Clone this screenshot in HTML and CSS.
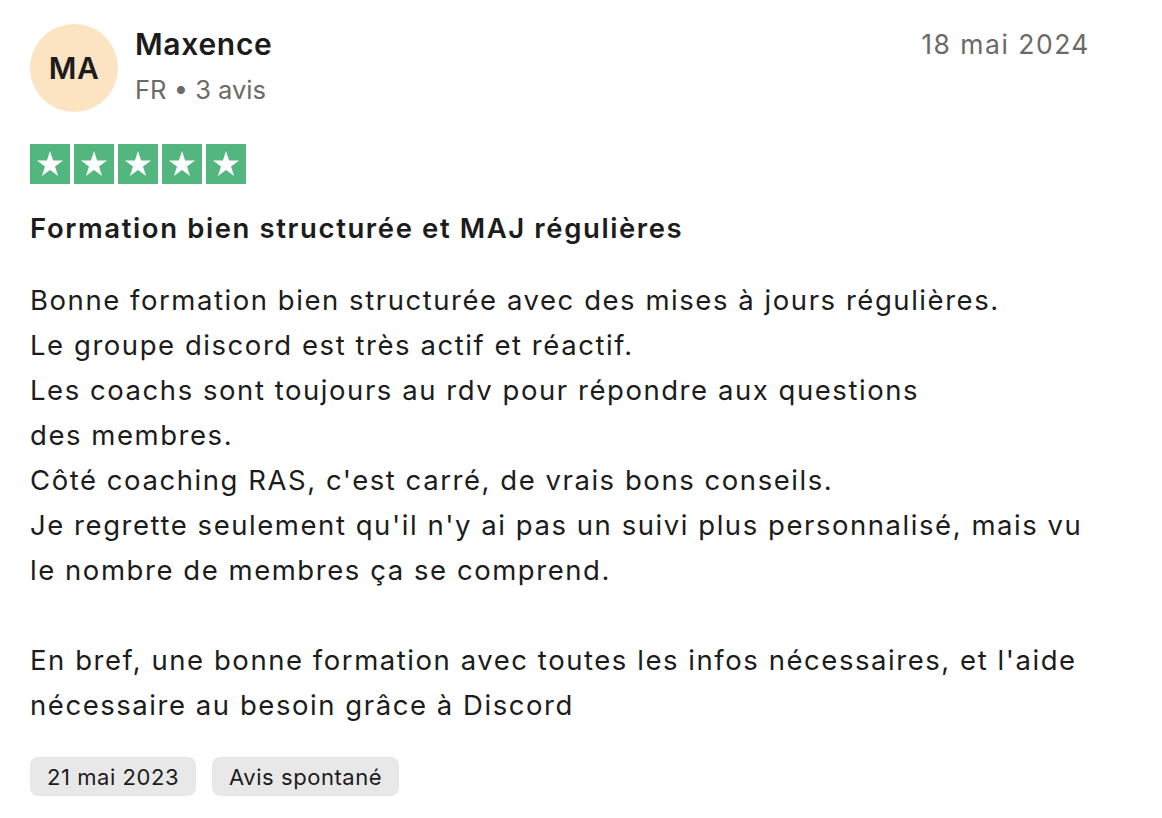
FILE: index.html
```html
<!DOCTYPE html>
<html lang="fr">
<head>
<meta charset="utf-8">
<title>Avis</title>
<link rel="stylesheet" href="styles.css">
</head>
<body>
<article class="review">
  <header class="head">
    <div class="avatar">MA</div>
    <div class="who">
      <div class="name">Maxence</div>
      <div class="meta">FR • 3 avis</div>
    </div>
    <time class="date">18 mai 2024</time>
  </header>
  <div class="stars">
    <span class="star"><svg viewBox="0 0 40 40"><path d="M20 7L23.1 16.54H33.12L25.01 22.43L28.11 31.96L20 26.07L11.89 31.96L14.99 22.43L6.88 16.54H16.9Z" fill="#fff"/></svg></span>
    <span class="star"><svg viewBox="0 0 40 40"><path d="M20 7L23.1 16.54H33.12L25.01 22.43L28.11 31.96L20 26.07L11.89 31.96L14.99 22.43L6.88 16.54H16.9Z" fill="#fff"/></svg></span>
    <span class="star"><svg viewBox="0 0 40 40"><path d="M20 7L23.1 16.54H33.12L25.01 22.43L28.11 31.96L20 26.07L11.89 31.96L14.99 22.43L6.88 16.54H16.9Z" fill="#fff"/></svg></span>
    <span class="star"><svg viewBox="0 0 40 40"><path d="M20 7L23.1 16.54H33.12L25.01 22.43L28.11 31.96L20 26.07L11.89 31.96L14.99 22.43L6.88 16.54H16.9Z" fill="#fff"/></svg></span>
    <span class="star"><svg viewBox="0 0 40 40"><path d="M20 7L23.1 16.54H33.12L25.01 22.43L28.11 31.96L20 26.07L11.89 31.96L14.99 22.43L6.88 16.54H16.9Z" fill="#fff"/></svg></span>
  </div>
  <h2 class="title">Formation bien structurée et MAJ régulières</h2>
  <p class="body">Bonne formation bien structurée avec des mises à jours régulières.<br>Le groupe discord est très actif et réactif.<br>Les coachs sont toujours au rdv pour répondre aux questions<br>des membres.<br>Côté coaching RAS, c'est carré, de vrais bons conseils.<br>Je regrette seulement qu'il n'y ai pas un suivi plus personnalisé, mais vu<br>le nombre de membres ça se comprend.<br><br>En bref, une bonne formation avec toutes les infos nécessaires, et l'aide<br>nécessaire au besoin grâce à Discord</p>
  <div class="tags">
    <span class="tag">21 mai 2023</span>
    <span class="tag">Avis spontané</span>
  </div>
</article>
</body>
</html>
```

FILE: styles.css
```css
* { box-sizing: border-box; }
html, body { margin: 0; background: #fff; }
body {
  font-family: "Inter", "Roboto", "Liberation Sans", sans-serif;
  color: #1c1c1c;
}
.review {
  width: 1162px;
  padding: 24px 72px 0 30px;
}
.head {
  display: flex;
  align-items: flex-start;
}
.avatar {
  width: 88px;
  height: 88px;
  border-radius: 50%;
  background: #fce3c2;
  display: flex;
  align-items: center;
  justify-content: center;
  font-size: 30px;
  font-weight: 600;
  letter-spacing: 0.5px;
  color: #1c1c1c;
  flex: none;
}
.who {
  margin-left: 17px;
  flex: 1;
}
.name {
  font-size: 30px;
  font-weight: 600;
  letter-spacing: 0.7px;
  line-height: 40px;
}
.meta {
  font-size: 25.5px;
  line-height: 36px;
  color: #6b6a66;
  margin-top: 8px;
}
.date {
  font-size: 26.5px;
  letter-spacing: 1.5px;
  line-height: 40px;
  color: #6b6a66;
}
.stars {
  display: flex;
  gap: 4px;
  margin-top: 32px;
}
.star {
  width: 40px;
  height: 40px;
  background: #54b67f;
  display: block;
}
.star svg { display: block; width: 40px; height: 40px; }
.title {
  margin: 26px 0 0;
  font-size: 27.5px;
  font-weight: 600;
  letter-spacing: 1.6px;
  line-height: 36px;
}
.body {
  margin: 32px 0 0;
  font-size: 27.5px;
  letter-spacing: 1.55px;
  line-height: 45px;
}
.tags {
  display: flex;
  gap: 16px;
  margin-top: 29px;
}
.tag {
  background: #e8e8e8;
  border-radius: 8px;
  height: 39px;
  padding: 0 17px;
  display: flex;
  align-items: center;
  font-size: 22px;
  letter-spacing: 0.55px;
  color: #1c1c1c;
}
```
